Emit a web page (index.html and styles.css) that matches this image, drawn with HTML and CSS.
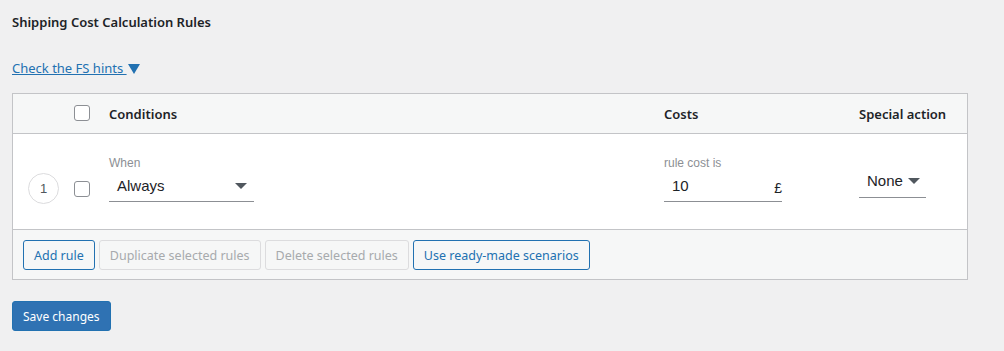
FILE: index.html
```html
<!DOCTYPE html>
<html lang="en">
<head>
<meta charset="UTF-8">
<meta name="viewport" content="width=device-width, initial-scale=1.0">
<title>Shipping Cost Calculation Rules</title>
<link rel="stylesheet" href="styles.css">
</head>
<body>
<div class="wrap">
  <h3 class="title">Shipping Cost Calculation Rules</h3>
  <a class="hints" href="#">Check the FS hints <span class="tri"></span></a>

  <div class="rules">
    <div class="row head">
      <div class="col-num"></div>
      <div class="col-check"><span class="checkbox"></span></div>
      <div class="col-cond">Conditions</div>
      <div class="col-cost">Costs</div>
      <div class="col-special">Special action</div>
    </div>

    <div class="row body">
      <div class="col-num"><span class="num">1</span></div>
      <div class="col-check"><span class="checkbox"></span></div>
      <div class="col-cond">
        <div class="label">When</div>
        <div class="field select-always">
          <span>Always</span>
          <span class="caret"></span>
        </div>
      </div>
      <div class="col-cost">
        <div class="label">rule cost is</div>
        <div class="field cost-input">
          <span>10</span>
          <span class="currency">&pound;</span>
        </div>
      </div>
      <div class="col-special">
        <div class="field select-none">
          <span>None</span>
          <span class="caret"></span>
        </div>
      </div>
    </div>

    <div class="footer">
      <button class="btn">Add rule</button>
      <button class="btn disabled">Duplicate selected rules</button>
      <button class="btn disabled">Delete selected rules</button>
      <button class="btn">Use ready-made scenarios</button>
    </div>
  </div>

  <button class="save">Save changes</button>
</div>
</body>
</html>
```

FILE: styles.css
```css
body {
  margin: 0;
  padding: 0;
  background-color: #f0f0f1;
  font-family: "Noto Sans", "Open Sans", sans-serif;
  color: #1d2327;
}
.wrap {
  padding: 12px 36px 0 12px;
}
.title {
  margin: 0;
  font-size: 13px;
  font-weight: 600;
  line-height: 20px;
}
.hints {
  display: inline-block;
  margin-top: 26px;
  color: #2271b1;
  font-size: 13px;
  line-height: 20px;
}
.tri {
  display: inline-block;
  width: 0;
  height: 0;
  margin-left: 1px;
  border-left: 6px solid transparent;
  border-right: 6px solid transparent;
  border-top: 10px solid #2271b1;
  vertical-align: -1px;
}
.rules {
  margin-top: 15px;
  border: 1px solid #c3c4c7;
  background-color: #f6f7f7;
}
.row {
  display: flex;
  align-items: center;
}
.head {
  height: 39px;
  font-size: 13px;
  font-weight: 600;
  border-bottom: 1px solid #c3c4c7;
}
.body {
  height: 95px;
  background-color: #fff;
  border-bottom: 1px solid #c3c4c7;
}
.col-num {
  width: 61px;
  display: flex;
  justify-content: center;
}
.col-check {
  width: 35px;
}
.col-cond {
  flex: 1;
}
.col-cost {
  width: 195px;
}
.col-special {
  width: 108px;
}
.checkbox {
  display: block;
  width: 14px;
  height: 14px;
  border: 1px solid #8c8f94;
  border-radius: 3px;
  background-color: #fff;
}
.head .checkbox {
  margin-top: -1px;
}
.body .col-num,
.body .col-check {
  margin-top: 14px;
}
.num {
  display: flex;
  align-items: center;
  justify-content: center;
  width: 29px;
  height: 29px;
  border: 1px solid #dcdcde;
  border-radius: 50%;
  font-family: "Liberation Sans", Arial, sans-serif;
  font-size: 13px;
  color: #50575e;
}
.label {
  font-family: "Liberation Sans", Arial, sans-serif;
  font-size: 12px;
  color: #8c8f94;
  line-height: 14px;
  margin-top: -6px;
}
.field {
  display: flex;
  align-items: center;
  justify-content: space-between;
  border-bottom: 1px solid #8c8f94;
  font-family: "Liberation Sans", Arial, sans-serif;
  font-size: 15px;
  color: #1d2327;
  box-sizing: border-box;
}
.select-always {
  width: 145px;
  height: 28px;
  margin-top: 4px;
  padding: 0 7px 3px 8px;
}
.cost-input {
  width: 118px;
  height: 28px;
  margin-top: 4px;
  padding: 0 0 3px 8px;
}
.currency {
  font-size: 14px;
  margin-top: 5px;
}
.select-none {
  width: 67px;
  height: 28px;
  margin-top: 4px;
  padding: 0 6px 5px 8px;
}
.caret {
  width: 0;
  height: 0;
  border-left: 6px solid transparent;
  border-right: 6px solid transparent;
  border-top: 6px solid #50575e;
}
.footer {
  display: flex;
  gap: 4px;
  padding: 10px 10px 9px 10px;
}
.btn {
  height: 30px;
  padding: 0 10px;
  border: 1px solid #2271b1;
  border-radius: 3px;
  background-color: #f6f7f7;
  color: #2271b1;
  font-family: "Noto Sans", "Open Sans", sans-serif;
  font-size: 12.5px;
}
.btn.disabled {
  border-color: #dcdcde;
  color: #a7aaad;
}
.save {
  margin-top: 21px;
  height: 30px;
  padding: 0 10px;
  border: 1px solid #2271b1;
  border-radius: 3px;
  background-color: #2f72b3;
  color: #fff;
  font-family: "Noto Sans", "Open Sans", sans-serif;
  font-size: 12px;
}
```
